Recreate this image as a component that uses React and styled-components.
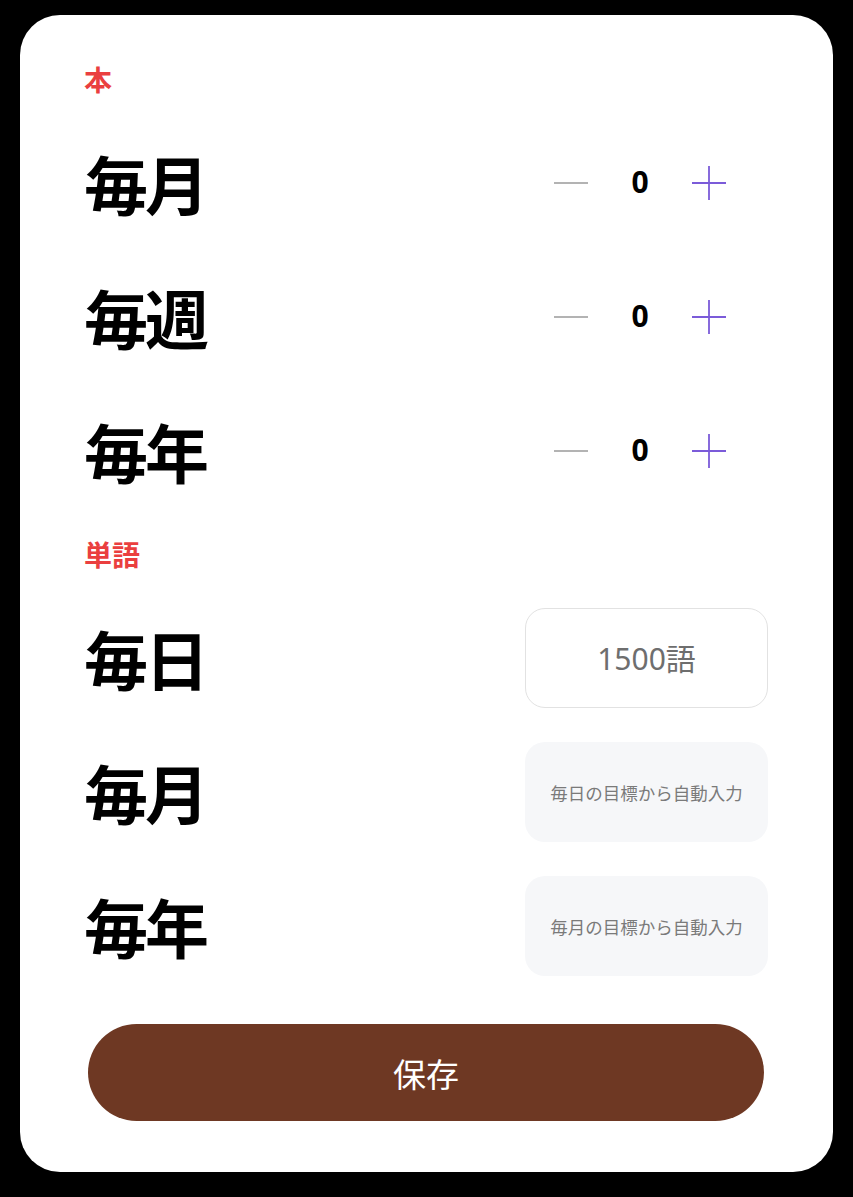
import { useState } from "react";
import styled, { createGlobalStyle } from "styled-components";

const GlobalStyle = createGlobalStyle`
  html, body {
    margin: 0;
    padding: 0;
    background: #000;
  }
  body {
    font-family: "Noto Sans CJK JP", "Noto Sans", sans-serif;
  }
`;

const bookRows = [
  { key: "month", label: "毎月" },
  { key: "week", label: "毎週" },
  { key: "year", label: "毎年" },
];

export default function App() {
  const [counts, setCounts] = useState({ month: 0, week: 0, year: 0 });
  const [daily, setDaily] = useState("");

  function change(key, delta) {
    setCounts((prev) => ({ ...prev, [key]: Math.max(0, prev[key] + delta) }));
  }

  return (
    <>
      <GlobalStyle />
      <StyledScreen>
        <StyledCard>
          <StyledSection>
            <StyledSectionLabel>本</StyledSectionLabel>
            {bookRows.map((row) => (
              <StyledRow key={row.key}>
                <StyledRowLabel>{row.label}</StyledRowLabel>
                <StyledStepper>
                  <StyledStepButton
                    aria-label="減らす"
                    onClick={() => change(row.key, -1)}
                  >
                    <svg width="34" height="34" viewBox="0 0 34 34">
                      <line x1="0" y1="17" x2="34" y2="17" stroke="#9a9a9a" strokeWidth="1.6" />
                    </svg>
                  </StyledStepButton>
                  <StyledCount>{counts[row.key]}</StyledCount>
                  <StyledStepButton
                    aria-label="増やす"
                    onClick={() => change(row.key, 1)}
                  >
                    <svg width="34" height="34" viewBox="0 0 34 34">
                      <line x1="0" y1="17" x2="34" y2="17" stroke="#7b5bd9" strokeWidth="1.8" />
                      <line x1="17" y1="0" x2="17" y2="34" stroke="#7b5bd9" strokeWidth="1.8" />
                    </svg>
                  </StyledStepButton>
                </StyledStepper>
              </StyledRow>
            ))}
          </StyledSection>

          <StyledSection>
            <StyledSectionLabel>単語</StyledSectionLabel>
            <StyledRow>
              <StyledRowLabel>毎日</StyledRowLabel>
              <StyledInput
                placeholder="1500語"
                value={daily}
                onChange={(e) => setDaily(e.target.value)}
              />
            </StyledRow>
            <StyledRow>
              <StyledRowLabel>毎月</StyledRowLabel>
              <StyledAutoBox>毎日の目標から自動入力</StyledAutoBox>
            </StyledRow>
            <StyledRow>
              <StyledRowLabel>毎年</StyledRowLabel>
              <StyledAutoBox>毎月の目標から自動入力</StyledAutoBox>
            </StyledRow>
          </StyledSection>

          <StyledSaveButton>保存</StyledSaveButton>
        </StyledCard>
      </StyledScreen>
    </>
  );
}

const StyledScreen = styled.div`
  padding: 15px 20px 25px 20px;
`;

const StyledCard = styled.div`
  background: #fff;
  border-radius: 40px;
  padding: 49px 65px 51px 64px;
  display: flex;
  flex-direction: column;
  gap: 38px;
`;

const StyledSection = styled.section`
  display: flex;
  flex-direction: column;
  gap: 34px;
`;

const StyledSectionLabel = styled.h2`
  margin: 0 0 3px 0;
  height: 32px;
  line-height: 30px;
  font-size: 28px;
  font-weight: 700;
  color: #ea3f3f;
`;

const StyledRow = styled.div`
  height: 100px;
  display: flex;
  align-items: center;
  justify-content: space-between;
`;

const StyledRowLabel = styled.span`
  font-size: 64px;
  font-weight: 700;
  color: #000;
  line-height: 1;
  letter-spacing: -3px;
  margin-top: -3px;
`;

const StyledStepper = styled.div`
  display: flex;
  align-items: center;
  margin-right: 42px;
`;

const StyledStepButton = styled.button`
  border: none;
  background: none;
  padding: 0;
  width: 34px;
  height: 34px;
  cursor: pointer;
  display: flex;
`;

const StyledCount = styled.span`
  width: 104px;
  text-align: center;
  font-family: "Noto Sans", sans-serif;
  font-size: 30px;
  font-weight: 700;
  color: #000;
  margin-top: -3px;
`;

const StyledInput = styled.input`
  box-sizing: border-box;
  width: 243px;
  height: 100px;
  border: 1.5px solid #e2e2e2;
  border-radius: 20px;
  background: #fff;
  text-align: center;
  font-family: "Noto Sans", "Noto Sans CJK JP", sans-serif;
  font-size: 30px;
  color: #555;
  outline: none;

  &::placeholder {
    color: #6e6e6e;
  }
`;

const StyledAutoBox = styled.div`
  box-sizing: border-box;
  width: 243px;
  height: 100px;
  border-radius: 20px;
  background: #f6f7f9;
  display: flex;
  align-items: center;
  justify-content: center;
  font-size: 17.5px;
  color: #7a7a7a;
`;

const StyledSaveButton = styled.button`
  margin: 10px 4px 0 4px;
  height: 97px;
  border: none;
  border-radius: 49px;
  background: #6e3823;
  color: #fff;
  font-family: "Noto Sans CJK JP", sans-serif;
  font-size: 33px;
  font-weight: 400;
  cursor: pointer;
`;
